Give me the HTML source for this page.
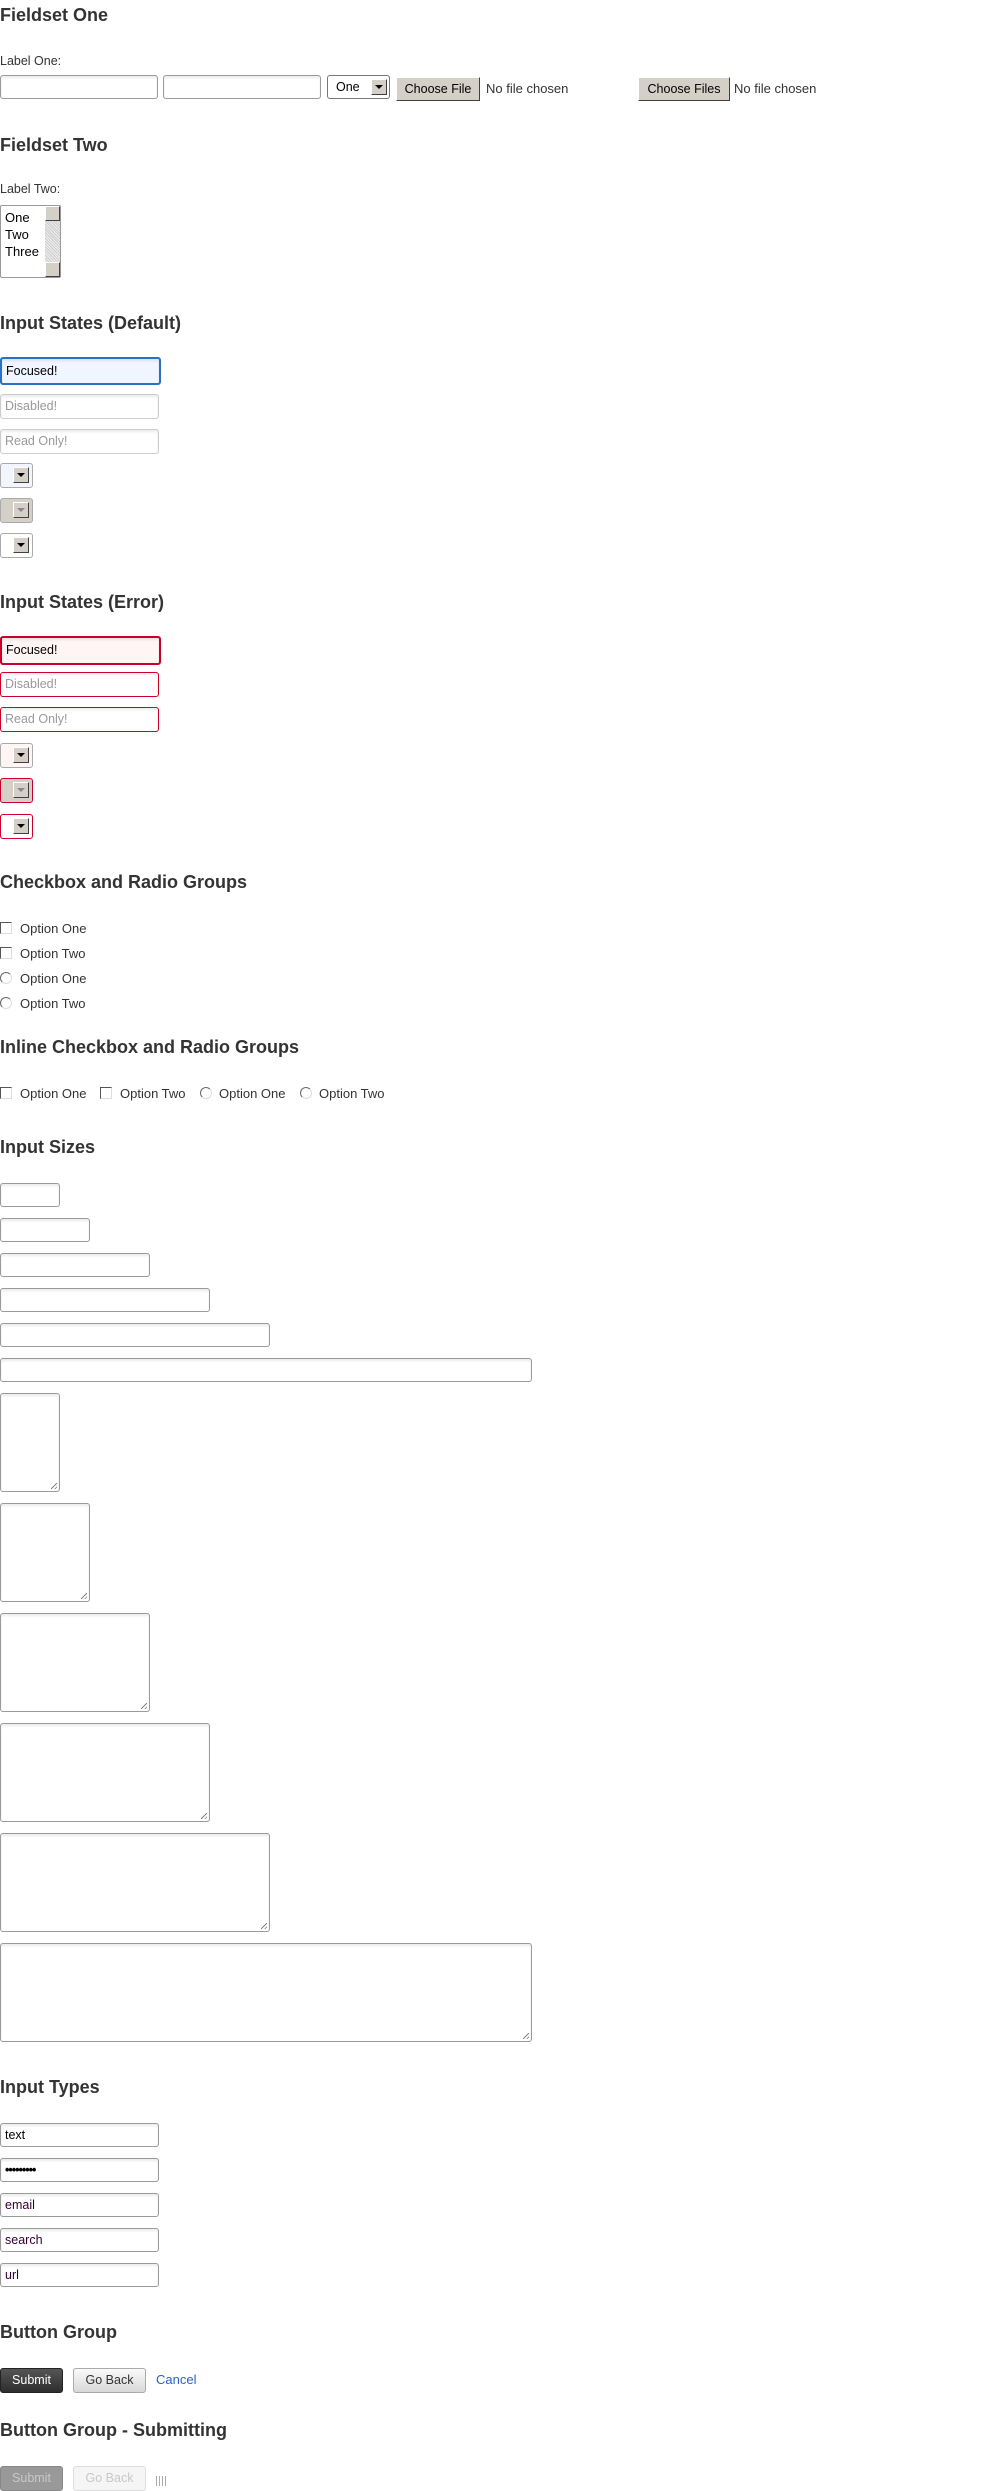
<!DOCTYPE html>
<html><head><meta charset="utf-8">
<style>
*{box-sizing:border-box;margin:0;padding:0}
html,body{width:1008px;height:2491px;background:#fff;overflow:hidden}
body{position:relative;font-family:"Liberation Sans",Arial,sans-serif;color:#333}
.a{position:absolute}
h2{position:absolute;left:0;font-size:18px;font-weight:bold;color:#333;line-height:20px;white-space:nowrap}
.lbl{position:absolute;left:0;font-size:12.5px;color:#333;line-height:14px}
.in{position:absolute;left:0;height:24px;border:1px solid #9a9a9a;border-radius:3px;background:#fff;box-shadow:inset 0 2px 2px rgba(0,0,0,.08);font-size:12.5px;line-height:22px;padding-left:4px;color:#330033;white-space:nowrap;overflow:hidden}
.ta{height:99px}
.ta:after{content:"";position:absolute;right:2px;bottom:2px;width:6px;height:6px;background:linear-gradient(135deg,transparent 45%,#777 46%,#777 54%,transparent 55%,transparent 75%,#777 76%,#777 84%,transparent 85%)}
.sel{position:absolute;left:0;width:33px;height:24px;border:1px solid #aaa;border-radius:3px;background:#fff}
.sel .b{position:absolute;left:12px;top:3px;width:16px;height:16px;background:#d4d0c8;border:1px solid;border-color:#fff #404040 #404040 #fff}
.sel .b:after{content:"";position:absolute;left:3px;top:5px;border-left:4px solid transparent;border-right:4px solid transparent;border-top:4px solid #000}
.sel.dis .b:after{border-top-color:#888}
.cb{position:absolute;width:12px;height:12px;border:1px solid;border-color:#555 #ddd #ddd #555;background:#fff}
.rd{position:absolute;width:12px;height:12px;border-radius:50%;border:1px solid;border-color:#666 #ddd #ddd #666;background:#fff}
.opt{position:absolute;font-size:13px;color:#333;line-height:14px;white-space:nowrap}
.btnw{position:absolute;height:24px;background:#d4d0c8;border:1px solid;border-color:#fff #404040 #404040 #fff;font-size:12.5px;line-height:22px;text-align:center;color:#000}
.fn{position:absolute;font-size:13px;line-height:14px;color:#333;white-space:nowrap}
.bt{position:absolute;height:25px;border-radius:3px;font-size:12.5px;line-height:23px;text-align:center}
</style></head><body>

<h2 style="top:5px">Fieldset One</h2>
<div class="lbl" style="top:54px">Label One:</div>
<div class="in" style="top:75px;width:158px"></div>
<div class="in" style="top:75px;left:163px;width:158px"></div>
<div class="sel" style="top:75px;left:327px;width:63px;border-color:#777"><span style="position:absolute;left:8px;top:4px;font-size:12.5px;color:#000">One</span><div class="b" style="left:43px"></div></div>
<div class="btnw" style="top:77px;left:396px;width:84px">Choose File</div>
<div class="fn" style="top:82px;left:486px">No file chosen</div>
<div class="btnw" style="top:77px;left:638px;width:92px">Choose Files</div>
<div class="fn" style="top:82px;left:734px">No file chosen</div>

<h2 style="top:135px">Fieldset Two</h2>
<div class="lbl" style="top:182px">Label Two:</div>
<div class="a" style="top:205px;left:0;width:61px;height:73px;border:1px solid #999;border-radius:2px;background:#fff">
 <div style="position:absolute;left:4px;top:3px;font-size:13px;line-height:17px;color:#000">One<br>Two<br>Three</div>
 <div style="position:absolute;right:0;top:0;width:15px;height:71px;background:repeating-linear-gradient(45deg,#eee 0 1px,#ccc 1px 2px)"></div>
 <div style="position:absolute;right:0;top:0;width:15px;height:15px;background:#d4d0c8;border:1px solid;border-color:#fff #404040 #404040 #fff"></div>
 <div style="position:absolute;right:0;bottom:0;width:15px;height:15px;background:#d4d0c8;border:1px solid;border-color:#fff #404040 #404040 #fff"></div>
</div>

<h2 style="top:313px">Input States (Default)</h2>
<div class="in" style="top:357px;width:161px;height:28px;border:2px solid #2a6fc9;background:#f0f5ff;color:#000;line-height:24px">Focused!</div>
<div class="in" style="top:394px;width:159px;height:25px;border-color:#ccc;color:#999">Disabled!</div>
<div class="in" style="top:429px;width:159px;height:25px;border-color:#ccc;color:#999">Read Only!</div>
<div class="sel" style="top:463px;height:25px;background:#f0f5ff"><div class="b"></div></div>
<div class="sel dis" style="top:498px;height:25px;background:#d4d0c8"><div class="b"></div></div>
<div class="sel" style="top:533px;height:25px"><div class="b"></div></div>

<h2 style="top:592px">Input States (Error)</h2>
<div class="in" style="top:636px;width:161px;height:29px;border:2px solid #c8002a;background:#fff5f5;color:#000;line-height:25px">Focused!</div>
<div class="in" style="top:672px;width:159px;height:25px;border-color:#c8002a;color:#999">Disabled!</div>
<div class="in" style="top:707px;width:159px;height:25px;border-color:#c8002a;color:#999">Read Only!</div>
<div class="sel" style="top:743px;height:25px;background:#fff5f5"><div class="b"></div></div>
<div class="sel dis" style="top:778px;height:25px;background:#d4d0c8;border-color:#c8002a"><div class="b"></div></div>
<div class="sel" style="top:814px;height:25px;border-color:#c8002a"><div class="b"></div></div>

<h2 style="top:872px">Checkbox and Radio Groups</h2>
<div class="cb" style="left:0;top:922px"></div><div class="opt" style="left:20px;top:922px">Option One</div>
<div class="cb" style="left:0;top:947px"></div><div class="opt" style="left:20px;top:947px">Option Two</div>
<div class="rd" style="left:0;top:972px"></div><div class="opt" style="left:20px;top:972px">Option One</div>
<div class="rd" style="left:0;top:997px"></div><div class="opt" style="left:20px;top:997px">Option Two</div>

<h2 style="top:1037px">Inline Checkbox and Radio Groups</h2>
<div class="cb" style="left:0;top:1087px"></div><div class="opt" style="left:20px;top:1087px">Option One</div>
<div class="cb" style="left:100px;top:1087px"></div><div class="opt" style="left:120px;top:1087px">Option Two</div>
<div class="rd" style="left:200px;top:1087px"></div><div class="opt" style="left:219px;top:1087px">Option One</div>
<div class="rd" style="left:300px;top:1087px"></div><div class="opt" style="left:319px;top:1087px">Option Two</div>

<h2 style="top:1137px">Input Sizes</h2>
<div class="in" style="top:1183px;width:60px"></div>
<div class="in" style="top:1218px;width:90px"></div>
<div class="in" style="top:1253px;width:150px"></div>
<div class="in" style="top:1288px;width:210px"></div>
<div class="in" style="top:1323px;width:270px"></div>
<div class="in" style="top:1358px;width:532px"></div>
<div class="in ta" style="top:1393px;width:60px"></div>
<div class="in ta" style="top:1503px;width:90px"></div>
<div class="in ta" style="top:1613px;width:150px"></div>
<div class="in ta" style="top:1723px;width:210px"></div>
<div class="in ta" style="top:1833px;width:270px"></div>
<div class="in ta" style="top:1943px;width:532px"></div>

<h2 style="top:2077px">Input Types</h2>
<div class="in" style="top:2123px;width:159px;color:#000">text</div>
<div class="in" style="top:2158px;width:159px;color:#000;font-weight:bold;letter-spacing:-1px">•••••••••</div>
<div class="in" style="top:2193px;width:159px">email</div>
<div class="in" style="top:2228px;width:159px">search</div>
<div class="in" style="top:2263px;width:159px">url</div>

<h2 style="top:2322px">Button Group</h2>
<div class="bt" style="top:2368px;left:0;width:63px;background:linear-gradient(#555,#2e2e2e);border:1px solid #222;color:#fff">Submit</div>
<div class="bt" style="top:2368px;left:73px;width:73px;background:linear-gradient(#fafafa,#d8d8d8);border:1px solid #aaa;color:#333">Go Back</div>
<div class="opt" style="top:2373px;left:156px;color:#2a62c9">Cancel</div>

<h2 style="top:2420px">Button Group - Submitting</h2>
<div class="bt" style="top:2466px;left:0;width:63px;background:#999;border:1px solid #888;color:#c8c8c8">Submit</div>
<div class="bt" style="top:2466px;left:73px;width:73px;background:#f5f5f5;border:1px solid #ddd;color:#c8c8c8">Go Back</div>
<div class="a" style="top:2476px;left:156px;width:12px;height:10px;background:repeating-linear-gradient(90deg,#aaa 0 1px,transparent 1px 3px)"></div>

</body></html>
